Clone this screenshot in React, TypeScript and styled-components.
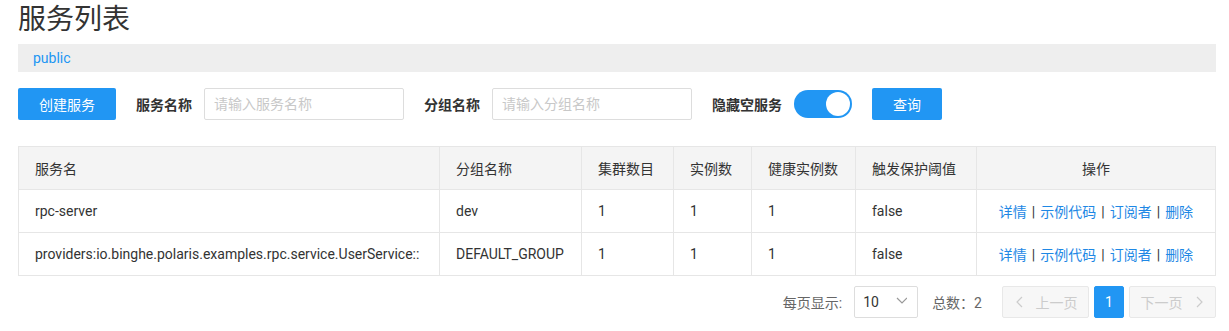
import React from 'react'
import styled, { createGlobalStyle } from 'styled-components'

const GlobalStyle = createGlobalStyle`
  body {
    margin: 0;
    font-family: Roboto, "Noto Sans CJK SC", sans-serif;
    font-size: 14px;
    color: #333;
    background: #fff;
  }
`

const Page = styled.div`
  padding: 0 13px 0 18px;
`

const Title = styled.h1`
  margin: 0 0 4px;
  font-size: 28px;
  font-weight: normal;
  line-height: 40px;
  color: #333;
`

const NamespaceBar = styled.div`
  height: 28px;
  line-height: 28px;
  background: #eee;
  padding-left: 15px;
  color: #2196f3;
`

const Toolbar = styled.div`
  display: flex;
  align-items: center;
  height: 32px;
  margin-top: 16px;
`

const Button = styled.button<{ $width: number }>`
  width: ${p => p.$width}px;
  height: 32px;
  border: none;
  border-radius: 2px;
  background: #2196f3;
  color: #fff;
  font: inherit;
  font-size: 14px;
  margin-right: 20px;
  padding: 0;
`

const Label = styled.span`
  font-weight: bold;
  color: #333;
  margin-right: 12px;
`

const Input = styled.input`
  box-sizing: border-box;
  width: 200px;
  height: 32px;
  border: 1px solid #ddd;
  border-radius: 2px;
  padding: 0 9px;
  font: inherit;
  margin-right: 20px;
  &::placeholder {
    color: #c8c8c8;
  }
`

const Switch = styled.div`
  box-sizing: border-box;
  width: 58px;
  height: 28px;
  border-radius: 14px;
  background: #2196f3;
  display: flex;
  justify-content: flex-end;
  align-items: center;
  padding: 2px;
  margin-right: 20px;
  > span {
    width: 24px;
    height: 24px;
    border-radius: 50%;
    background: #fff;
  }
`

const Table = styled.table`
  margin-top: 26px;
  width: 100%;
  border-collapse: collapse;
  table-layout: fixed;
  th, td {
    border: 1px solid #e6e6e6;
    text-align: left;
    padding: 0 16px;
    height: 42px;
    font-weight: normal;
    color: #333;
    white-space: nowrap;
    overflow: hidden;
  }
  th {
    background: #f4f4f4;
  }
`

const Cell = styled.td<{ $center?: boolean }>`
  text-align: ${p => (p.$center ? 'center' : 'left')} !important;
`

const Link = styled.a`
  color: #1e88e5;
  text-decoration: none;
`

const Sep = styled.span`
  color: #333;
  margin: 0 5px;
`

const Pager = styled.div`
  display: flex;
  justify-content: flex-end;
  align-items: center;
  margin-top: 10px;
  height: 32px;
  color: #666;
`

const Select = styled.div`
  box-sizing: border-box;
  width: 64px;
  height: 32px;
  border: 1px solid #ddd;
  border-radius: 2px;
  display: flex;
  align-items: center;
  justify-content: space-between;
  padding: 0 10px 0 8px;
  margin: 0 14px 0 12px;
  color: #333;
`

const Total = styled.span`
  margin-right: 15px;
`

const PageBtn = styled.div<{ $active?: boolean; $width: number }>`
  box-sizing: border-box;
  width: ${p => p.$width}px;
  height: 32px;
  border-radius: 2px;
  display: flex;
  align-items: center;
  justify-content: center;
  gap: 10px;
  background: ${p => (p.$active ? '#2196f3' : '#f7f7f7')};
  border: 1px solid ${p => (p.$active ? '#2196f3' : '#e8e8e8')};
  color: ${p => (p.$active ? '#fff' : '#ccc')};
  margin-left: 5px;
`

const Chevron = ({ dir }: { dir: 'left' | 'right' | 'down' }) => {
  const d = dir === 'left' ? 'M8 2 L3 7 L8 12' : dir === 'right' ? 'M4 2 L9 7 L4 12' : 'M2 4 L7 9 L12 4'
  return (
    <svg width="12" height="14" viewBox="0 0 12 14" fill="none" stroke="currentColor" strokeWidth="1.2">
      <path d={d} />
    </svg>
  )
}

const rows = [
  { name: 'rpc-server', group: 'dev' },
  { name: 'providers:io.binghe.polaris.examples.rpc.service.UserService::', group: 'DEFAULT_GROUP' },
]

export default function App() {
  return (
    <Page>
      <GlobalStyle />
      <Title>服务列表</Title>
      <NamespaceBar>public</NamespaceBar>
      <Toolbar>
        <Button $width={98}>创建服务</Button>
        <Label>服务名称</Label>
        <Input placeholder="请输入服务名称" />
        <Label>分组名称</Label>
        <Input placeholder="请输入分组名称" />
        <Label>隐藏空服务</Label>
        <Switch><span /></Switch>
        <Button $width={70}>查询</Button>
      </Toolbar>
      <Table>
        <colgroup>
          <col style={{ width: 421 }} />
          <col style={{ width: 142 }} />
          <col style={{ width: 92 }} />
          <col style={{ width: 78 }} />
          <col style={{ width: 104 }} />
          <col style={{ width: 121 }} />
          <col />
        </colgroup>
        <thead>
          <tr>
            <th>服务名</th>
            <th>分组名称</th>
            <th>集群数目</th>
            <th>实例数</th>
            <th>健康实例数</th>
            <th>触发保护阈值</th>
            <Cell as="th" $center>操作</Cell>
          </tr>
        </thead>
        <tbody>
          {rows.map(r => (
            <tr key={r.name}>
              <td>{r.name}</td>
              <td>{r.group}</td>
              <td>1</td>
              <td>1</td>
              <td>1</td>
              <td>false</td>
              <Cell $center>
                <Link>详情</Link><Sep>|</Sep>
                <Link>示例代码</Link><Sep>|</Sep>
                <Link>订阅者</Link><Sep>|</Sep>
                <Link>删除</Link>
              </Cell>
            </tr>
          ))}
        </tbody>
      </Table>
      <Pager>
        <span>每页显示:</span>
        <Select>10 <span style={{ color: '#999' }}><Chevron dir="down" /></span></Select>
        <Total>总数：2</Total>
        <PageBtn $width={87}><Chevron dir="left" />上一页</PageBtn>
        <PageBtn $width={30} $active>1</PageBtn>
        <PageBtn $width={87}>下一页<Chevron dir="right" /></PageBtn>
      </Pager>
    </Page>
  )
}
